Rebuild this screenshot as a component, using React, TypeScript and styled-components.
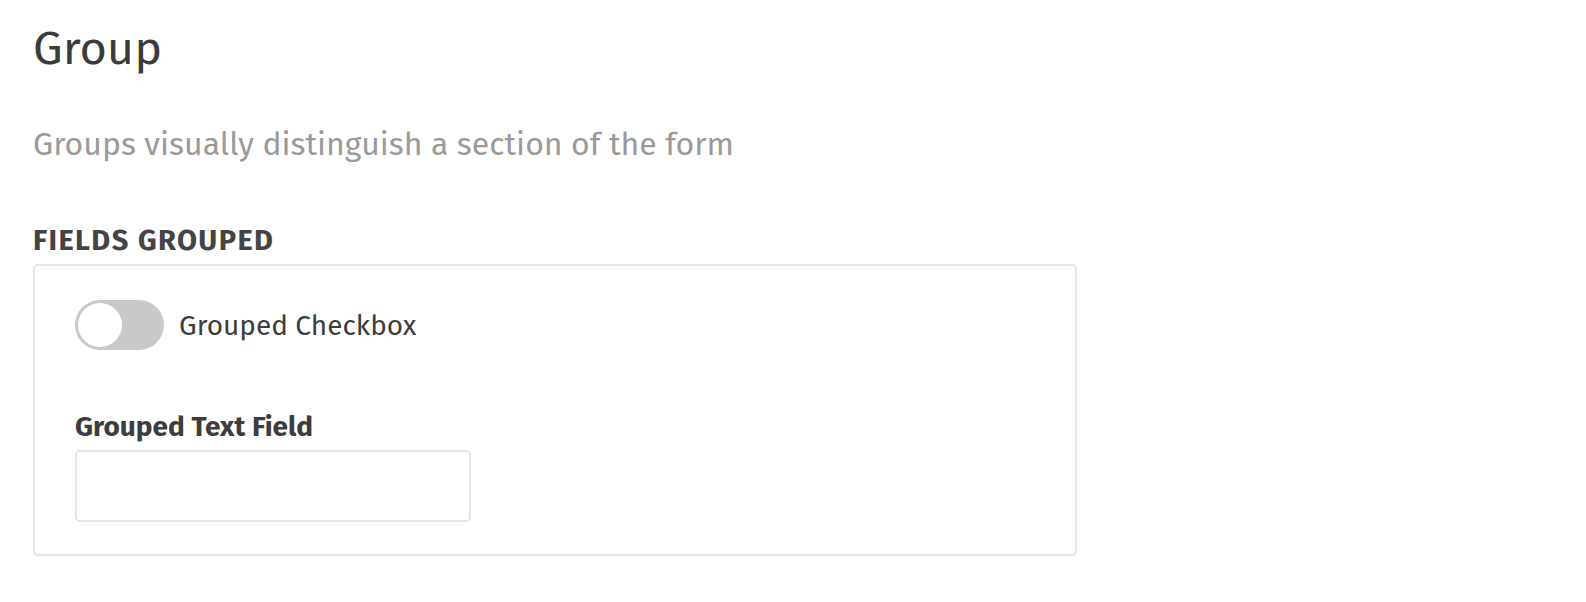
import React from 'react';
import styled, { createGlobalStyle } from 'styled-components';

const GlobalStyle = createGlobalStyle`
  html, body {
    margin: 0;
    padding: 0;
    background: #ffffff;
  }

  body {
    font-family: 'Fira Sans', 'Open Sans', 'Noto Sans', sans-serif;
    color: #3c3c3c;
  }
`;

const Page = styled.main`
  padding: 20px 33px 40px;
`;

const Title = styled.h1`
  margin: 0;
  font-size: 47px;
  line-height: 56px;
  font-weight: 400;
  color: #3b3b3b;
`;

const Description = styled.p`
  margin: 49px 0 0;
  font-size: 32px;
  line-height: 38px;
  color: #9a9a9a;
`;

const SectionLabel = styled.h2`
  margin: 60px 0 0;
  font-size: 29px;
  line-height: 35px;
  font-weight: 700;
  letter-spacing: 1.4px;
  text-transform: uppercase;
  color: #444444;
`;

const GroupBox = styled.section`
  box-sizing: border-box;
  width: 1044px;
  margin-top: 6px;
  padding: 34px 40px 32px;
  border: 2px solid #e6e6e6;
  border-radius: 5px;
  display: flex;
  flex-direction: column;
`;

const ToggleRow = styled.label`
  display: flex;
  align-items: center;
  gap: 15px;
  font-size: 28px;
  color: #3d3d3d;
  cursor: pointer;
`;

const Track = styled.span<{ $on: boolean }>`
  position: relative;
  flex: none;
  width: 89px;
  height: 50px;
  border-radius: 25px;
  background: ${({ $on }) => ($on ? '#3f6fd8' : '#c9c9c9')};
`;

const Knob = styled.span<{ $on: boolean }>`
  position: absolute;
  top: 3px;
  left: ${({ $on }) => ($on ? '42px' : '3px')};
  width: 44px;
  height: 44px;
  border-radius: 50%;
  background: #ffffff;
`;

const Field = styled.div`
  display: flex;
  flex-direction: column;
  margin-top: 60px;
`;

const FieldLabel = styled.label`
  font-size: 28px;
  line-height: 34px;
  font-weight: 700;
  color: #3d3d3d;
`;

const TextInput = styled.input`
  box-sizing: border-box;
  width: 396px;
  height: 72px;
  margin-top: 6px;
  padding: 0 16px;
  border: 2px solid #e6e6e6;
  border-radius: 5px;
  font: inherit;
  font-size: 28px;
  outline: none;
`;

const App: React.FC = () => {
  const [checked, setChecked] = React.useState(false);

  return (
    <>
      <GlobalStyle />
      <Page>
        <Title>Group</Title>
        <Description>Groups visually distinguish a section of the form</Description>
        <SectionLabel>Fields Grouped</SectionLabel>
        <GroupBox>
          <ToggleRow onClick={() => setChecked(c => !c)}>
            <Track $on={checked}>
              <Knob $on={checked} />
            </Track>
            Grouped Checkbox
          </ToggleRow>
          <Field>
            <FieldLabel htmlFor="grouped-text">Grouped Text Field</FieldLabel>
            <TextInput id="grouped-text" type="text" />
          </Field>
        </GroupBox>
      </Page>
    </>
  );
};

export default App;
